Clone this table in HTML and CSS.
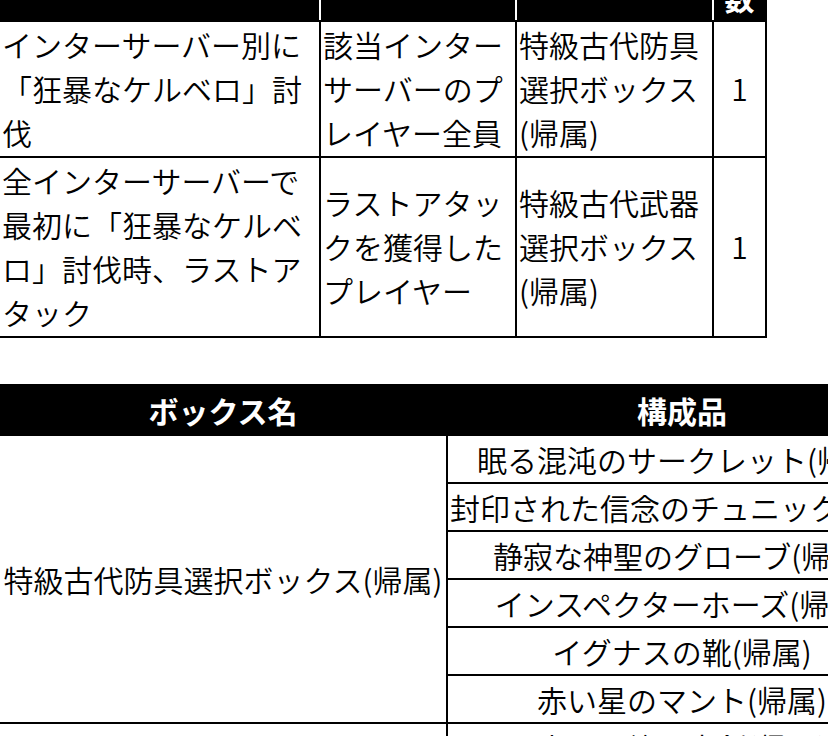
FILE: index.html
```html
<!DOCTYPE html>
<html lang="ja">
<head>
<meta charset="utf-8">
<title>報酬</title>
<link rel="stylesheet" href="styles.css">
</head>
<body>
<div class="page">
  <table class="reward">
    <colgroup>
      <col class="c1"><col class="c2"><col class="c3"><col class="c4">
    </colgroup>
    <thead>
      <tr><th>条件</th><th>対象</th><th>報酬</th><th class="last">個数</th></tr>
    </thead>
    <tbody>
      <tr>
        <td>インターサーバー別に「狂暴なケルベロ」討伐</td>
        <td>該当インターサーバーのプレイヤー全員</td>
        <td>特級古代防具選択ボックス(帰属)</td>
        <td class="num">1</td>
      </tr>
      <tr>
        <td>全インターサーバーで最初に「狂暴なケルベロ」討伐時、ラストアタック</td>
        <td>ラストアタックを獲得したプレイヤー</td>
        <td>特級古代武器選択ボックス(帰属)</td>
        <td class="num">1</td>
      </tr>
    </tbody>
  </table>

  <table class="boxes">
    <colgroup>
      <col class="b1"><col class="b2">
    </colgroup>
    <thead>
      <tr><th>ボックス名</th><th>構成品</th></tr>
    </thead>
    <tbody>
      <tr><td rowspan="6">特級古代防具選択ボックス(帰属)</td><td>眠る混沌のサークレット(帰属)</td></tr>
      <tr><td>封印された信念のチュニック(帰属)</td></tr>
      <tr><td>静寂な神聖のグローブ(帰属)</td></tr>
      <tr><td>インスペクターホーズ(帰属)</td></tr>
      <tr><td>イグナスの靴(帰属)</td></tr>
      <tr><td>赤い星のマント(帰属)</td></tr>
      <tr><td rowspan="4">特級古代武器選択ボックス(帰属)</td><td>赤い霊峰の大剣(帰属)</td></tr>
      <tr><td>封印された信念の長剣(帰属)</td></tr>
      <tr><td>静寂な神聖の杖(帰属)</td></tr>
      <tr><td>イグナスの弓(帰属)</td></tr>
    </tbody>
  </table>
</div>
</body>
</html>
```

FILE: styles.css
```css
html, body {
  margin: 0;
  padding: 0;
  background: #fff;
}
body {
  overflow: hidden;
  font-family: "Noto Sans CJK JP", "Noto Sans", sans-serif;
  font-size: 30px;
  font-weight: 350;
  line-height: 44px;
  color: #000;
}
.page {
  overflow: hidden;
  width: 828px;
  height: 736px;
}
table {
  border-collapse: collapse;
  table-layout: fixed;
  margin-left: -2px;
}
th, td {
  border: 2px solid #000;
  padding: 1px 2px;
  vertical-align: middle;
}
th {
  background: #000;
  color: #fff;
  font-weight: 600;
  text-align: center;
}

/* top table */
.reward {
  width: 767px;
  margin-top: -72px;
}
.reward .c1 { width: 321px; }
.reward .c2 { width: 196px; }
.reward .c3 { width: 197px; }
.reward .c4 { width: 53px; }
.reward th {
  border-color: #000 #fff #000 #fff;
}
.reward th:first-child { border-left-color: #000; }
.reward th.last { border-right-color: #000; }
.reward td {
  text-align: left;
  padding: 0 2px 2px;
}
.reward td.num { text-align: center; }

/* second table */
.boxes {
  width: 918px;
  margin-top: 46px;
}
.boxes .b1 { width: 448px; }
.boxes .b2 { width: 470px; }
.boxes th {
  padding: 2px 2px;
}
.boxes td {
  text-align: center;
  white-space: nowrap;
}
```
